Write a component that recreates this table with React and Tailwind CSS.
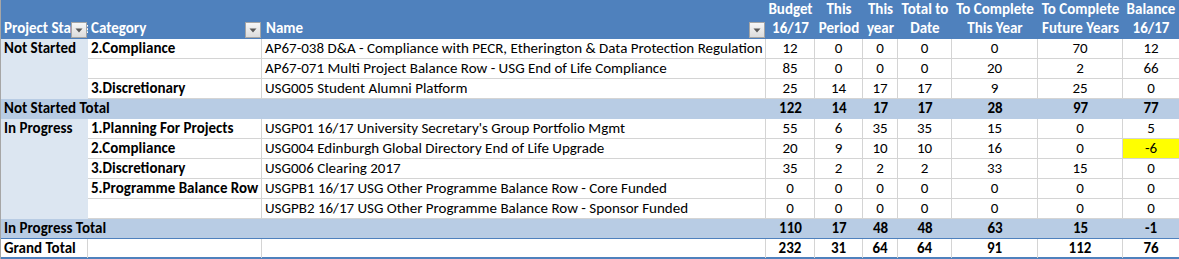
import React from "react"

const groups = [
  {
    status: 'Not Started',
    rows: [
      { cat: '2.Compliance', name: 'AP67-038 D&A - Compliance with PECR, Etherington & Data Protection Regulation', v: [12, 0, 0, 0, 0, 70, 12] },
      { cat: '', name: 'AP67-071 Multi Project Balance Row - USG End of Life Compliance', v: [85, 0, 0, 0, 20, 2, 66] },
      { cat: '3.Discretionary', name: 'USG005 Student Alumni Platform', v: [25, 14, 17, 17, 9, 25, 0] },
    ],
    total: [122, 14, 17, 17, 28, 97, 77],
  },
  {
    status: 'In Progress',
    rows: [
      { cat: '1.Planning For Projects', name: "USGP01 16/17 University Secretary's Group Portfolio Mgmt", v: [55, 6, 35, 35, 15, 0, 5] },
      { cat: '2.Compliance', name: 'USG004 Edinburgh Global Directory End of Life Upgrade', v: [20, 9, 10, 10, 16, 0, -6], flag: true },
      { cat: '3.Discretionary', name: 'USG006 Clearing 2017', v: [35, 2, 2, 2, 33, 15, 0] },
      { cat: '5.Programme Balance Row', name: 'USGPB1 16/17 USG Other Programme Balance Row - Core Funded', v: [0, 0, 0, 0, 0, 0, 0] },
      { cat: '', name: 'USGPB2 16/17 USG Other Programme Balance Row - Sponsor Funded', v: [0, 0, 0, 0, 0, 0, 0] },
    ],
    total: [110, 17, 48, 48, 63, 15, -1],
  },
]

const grand = [232, 31, 64, 64, 91, 112, 76]

const heads = [
  ['Budget', '16/17'],
  ['This', 'Period'],
  ['This', 'year'],
  ['Total to', 'Date'],
  ['To Complete', 'This Year'],
  ['To Complete', 'Future Years'],
  ['Balance', '16/17'],
]

const cols = "grid grid-cols-[87px_174px_504px_49px_48px_35px_54px_86px_85px_56px]"
const subCols = "grid grid-cols-[174px_504px_49px_48px_35px_54px_86px_85px_56px]"

function DropBtn() {
  return (
    <span className="absolute right-[1px] bottom-[1px] w-4 h-4 border border-[#a5a5a5] bg-gradient-to-b from-[#f7f7f7] to-[#dcdcdc] flex items-center justify-center">
      <svg width="8" height="5" viewBox="0 0 8 5">
        <path d="M0.5 0.5 L7.5 0.5 L4 4.5 Z" fill="#595959" />
      </svg>
    </span>
  )
}

function DataRow({ r }) {
  return (
    <div className={subCols + " h-5"}>
      <div className="px-[3px] font-bold border-r border-b border-[#d4d4d4] whitespace-nowrap overflow-hidden">{r.cat}</div>
      <div className="px-[3px] border-r border-b border-[#d4d4d4] whitespace-nowrap overflow-hidden">{r.name}</div>
      {r.v.map((n, i) => (
        <div key={i} className={`text-center border-b border-[#d4d4d4] ${i < 6 ? 'border-r' : ''} ${r.flag && i === 6 ? 'bg-[#ffff00]' : ''}`}>{n}</div>
      ))}
    </div>
  )
}

export default function App() {
  return (
    <div className="w-[1179px] h-[259px] bg-white overflow-hidden border-l border-[#a6a6a6] text-[15px] leading-[19px] text-black font-[family-name:Carlito,Calibri,Lato,sans-serif]">

      {/* cabecera */}
      <div className={cols + " h-[39px] bg-[#4f81bd] text-white font-bold"}>
        <div className="relative flex items-end pb-[1px] px-[3px] overflow-hidden whitespace-nowrap">
          Project Status
          <DropBtn />
        </div>
        <div className="relative flex items-end pb-[1px] px-[3px]">
          Category
          <DropBtn />
        </div>
        <div className="relative flex items-end pb-[1px] px-[4px]">
          Name
          <DropBtn />
        </div>
        {heads.map((h, i) => (
          <div key={i} className="flex flex-col items-center justify-end pb-[1px] whitespace-nowrap">
            <span>{h[0]}</span>
            <span>{h[1]}</span>
          </div>
        ))}
      </div>

      {groups.map(g => (
        <React.Fragment key={g.status}>
          <div className="flex">
            <div className="w-[87px] shrink-0 bg-[#dce6f1] px-[3px] font-bold">{g.status}</div>
            <div>
              {g.rows.map((r, i) => <DataRow key={i} r={r} />)}
            </div>
          </div>
          <div className={cols + ` h-5 bg-[#b8cce4] font-bold ${g.status === 'In Progress' ? 'border-b border-[#4f81bd]' : ''}`}>
            <div className="col-span-3 px-[3px]">{g.status} Total</div>
            {g.total.map((n, i) => <div key={i} className="text-center">{n}</div>)}
          </div>
        </React.Fragment>
      ))}

      <div className={cols + " h-5 font-bold border-b-2 border-[#4f81bd]"}>
        <div className="px-[3px] border-r border-[#d4d4d4]">Grand Total</div>
        <div className="border-r border-[#d4d4d4]"></div>
        <div className="border-r border-[#d4d4d4]"></div>
        {grand.map((n, i) => <div key={i} className={`text-center ${i < 6 ? 'border-r border-[#d4d4d4]' : ''}`}>{n}</div>)}
      </div>
    </div>
  )
}
